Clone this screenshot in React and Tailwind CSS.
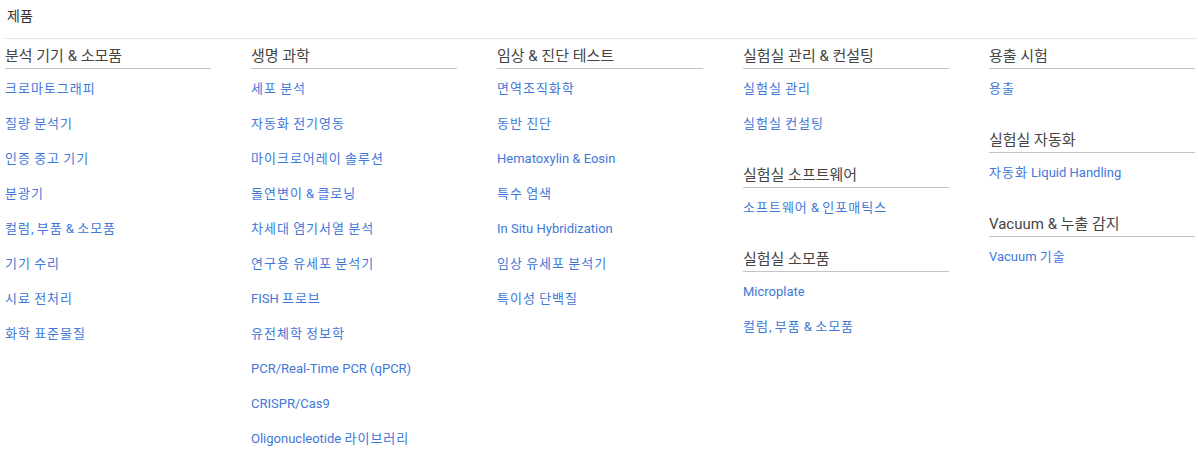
const columns = [
  [
    { title: "분석 기기 & 소모품", links: ["크로마토그래피", "질량 분석기", "인증 중고 기기", "분광기", "컬럼, 부품 & 소모품", "기기 수리", "시료 전처리", "화학 표준물질"] },
  ],
  [
    { title: "생명 과학", links: ["세포 분석", "자동화 전기영동", "마이크로어레이 솔루션", "돌연변이 & 클로닝", "차세대 염기서열 분석", "연구용 유세포 분석기", "FISH 프로브", "유전체학 정보학", "PCR/Real-Time PCR (qPCR)", "CRISPR/Cas9", "Oligonucleotide 라이브러리"] },
  ],
  [
    { title: "임상 & 진단 테스트", links: ["면역조직화학", "동반 진단", "Hematoxylin & Eosin", "특수 염색", "In Situ Hybridization", "임상 유세포 분석기", "특이성 단백질"] },
  ],
  [
    { title: "실험실 관리 & 컨설팅", links: ["실험실 관리", "실험실 컨설팅"] },
    { title: "실험실 소프트웨어", links: ["소프트웨어 & 인포매틱스"] },
    { title: "실험실 소모품", links: ["Microplate", "컬럼, 부품 & 소모품"] },
  ],
  [
    { title: "용출 시험", links: ["용출"] },
    { title: "실험실 자동화", links: ["자동화 Liquid Handling"] },
    { title: "Vacuum & 누출 감지", links: ["Vacuum 기술"] },
  ],
];

// hangul runs get a little extra spacing so they sit as wide as in the original
const Spaced = ({ text }) =>
  text.split(/([\uac00-\ud7a3]+)/).map((part, i) =>
    /[\uac00-\ud7a3]/.test(part) ? (
      <span key={i} className="tracking-[1px]">{part}</span>
    ) : (
      part
    )
  );

function Section({ title, links }) {
  return (
    <div>
      <h3 className="text-[15px] leading-[20px] text-[#444] pb-[2px] border-b border-[#c4c4c4]">{title}</h3>
      <ul className="mt-[2px]">
        {links.map((l) => (
          <li key={l} className="h-[35px] leading-[35px] text-[13px] text-[#4178d8] whitespace-nowrap">
            <a href="#" className="hover:underline"><Spaced text={l} /></a>
          </li>
        ))}
      </ul>
    </div>
  );
}

export default function App() {
  return (
    <div className="min-h-screen bg-white pl-[5px] pr-[1px]" style={{ fontFamily: 'Roboto, "Noto Sans CJK KR", sans-serif' }}>
      <div className="pt-[6px] pb-[12px] border-b border-[#e3e3e3]">
        <h2 className="text-[14px] leading-[20px] text-[#333] pl-[2px]">제품</h2>
      </div>
      <div className="mt-[7px] grid grid-cols-[repeat(5,206px)] gap-x-[40px]">
        {columns.map((sections, i) => (
          <div key={i} className="flex flex-col gap-[24px]">
            {sections.map((s) => (
              <Section key={s.title} {...s} />
            ))}
          </div>
        ))}
      </div>
    </div>
  );
}
